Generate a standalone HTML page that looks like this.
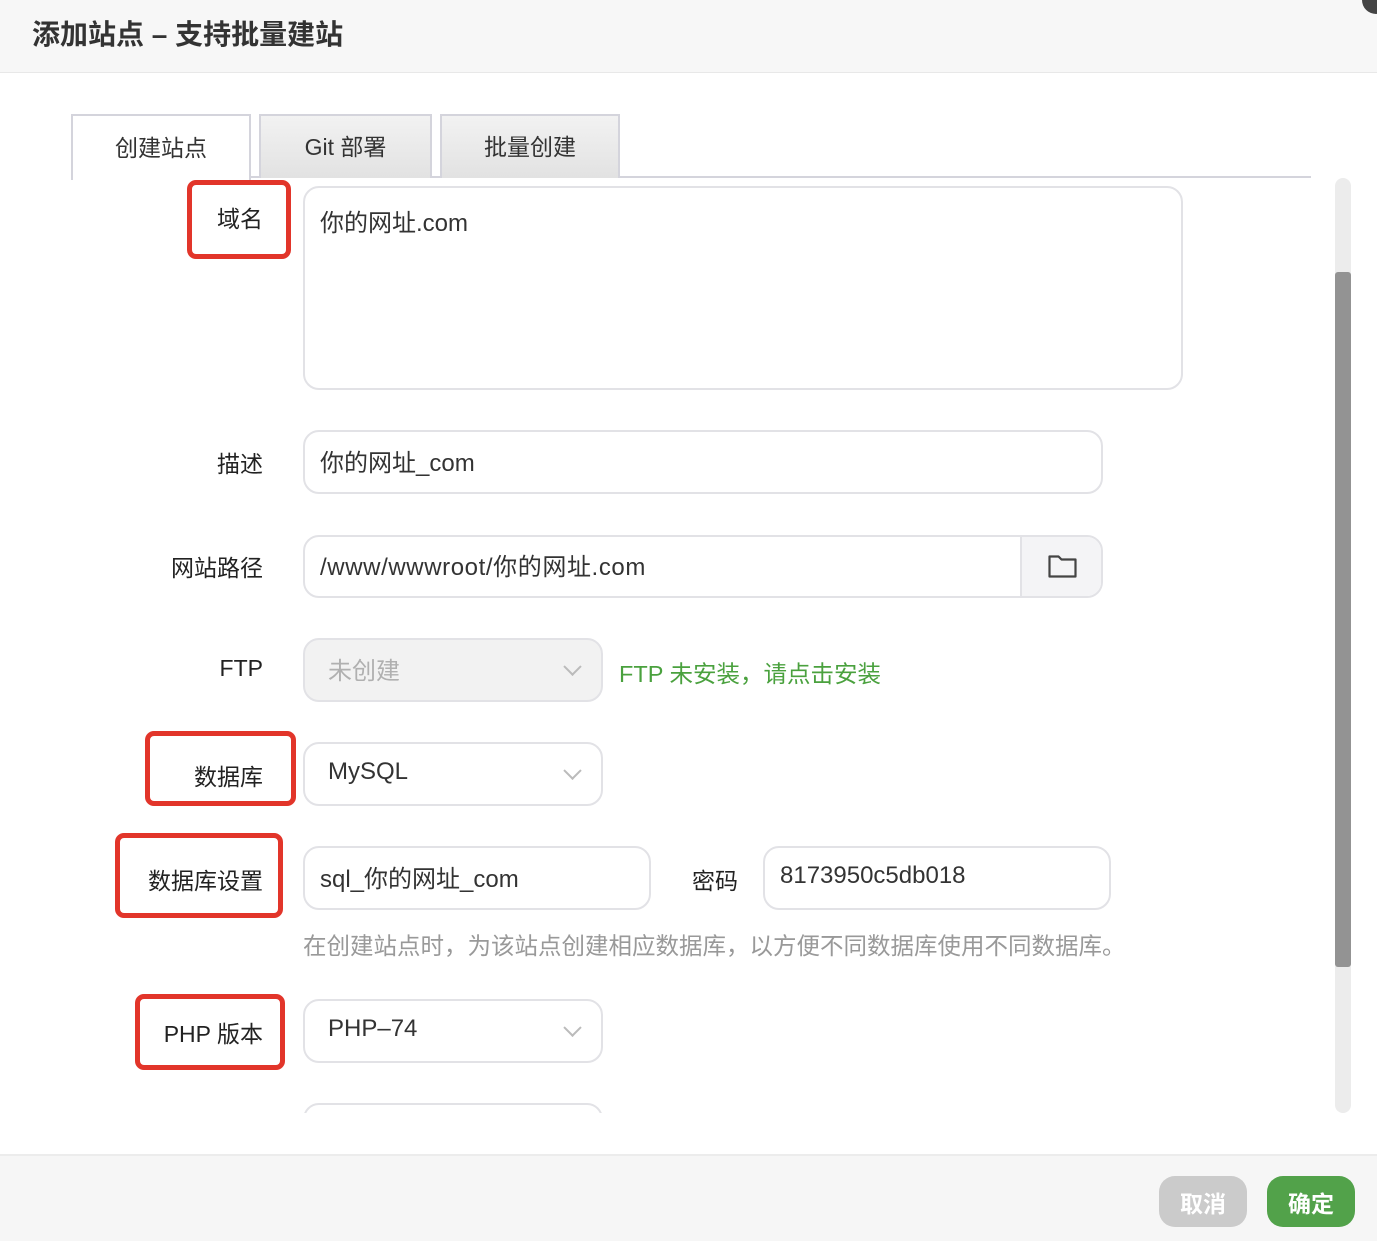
<!DOCTYPE html>
<html><head><meta charset="utf-8"><style>
*{box-sizing:border-box;margin:0;padding:0}
body{width:1377px;height:1241px;position:relative;background:#fff;font-family:"Liberation Sans","Noto Sans CJK SC",sans-serif;overflow:hidden;color:#333}
.a{position:absolute}
.hdr{left:0;top:0;width:1377px;height:73px;background:#f7f7f7;border-bottom:1px solid #e8e8e8}
.title{left:32px;top:13px;font-size:28px;font-weight:bold;color:#333}
.tab{top:114px;height:64px;border:2px solid #d4d4dc;border-bottom:none;font-size:23px;color:#333;display:flex;align-items:center;justify-content:center;padding-bottom:4px;background:linear-gradient(#f2f2f2,#e2e2e2)}
.inp{border:2px solid #e2e2e6;border-radius:16px;background:#fff;font-size:24px;color:#333;padding-left:15px;padding-bottom:4px;display:flex;align-items:center}
.lbl{font-size:23px;color:#222;text-align:right;width:200px}
.red{border:5px solid #e2352a;border-radius:9px}
.chev{position:absolute;right:22px;top:50%;width:13px;height:13px;border-right:2px solid #bbb;border-bottom:2px solid #bbb;transform:translateY(-75%) rotate(45deg)}
</style></head><body>
<div class="a hdr"></div>
<div class="a title">添加站点 – 支持批量建站</div>
<div class="a" style="left:1362px;top:-14px;width:28px;height:28px;border-radius:50%;background:#444"></div>

<div class="a" style="left:71px;top:176px;width:1240px;height:2px;background:#d4d4dc"></div>
<div class="a tab" style="left:71px;width:180px;background:#fff;height:66px">创建站点</div>
<div class="a tab" style="left:259px;width:173px">Git 部署</div>
<div class="a tab" style="left:440px;width:180px">批量创建</div>

<div class="a red" style="left:187px;top:180px;width:104px;height:79px"></div>
<div class="a lbl" style="left:63px;top:200px">域名</div>
<div class="a inp" style="left:303px;top:186px;width:880px;height:204px;align-items:flex-start;padding-top:15px">你的网址.com</div>

<div class="a lbl" style="left:63px;top:445px">描述</div>
<div class="a inp" style="left:303px;top:430px;width:800px;height:64px">你的网址_com</div>

<div class="a lbl" style="left:63px;top:549px">网站路径</div>
<div class="a inp" style="left:303px;top:535px;width:800px;height:63px;overflow:hidden;letter-spacing:0.6px">/www/wwwroot/你的网址.com
<div class="a" style="left:715px;top:0;width:85px;height:63px;background:#f4f4f6;border-left:2px solid #e2e2e6">
<svg class="a" style="left:26px;top:17px" width="30" height="26" viewBox="0 0 30 26"><path d="M1.5 2.5h9l3 3h14v17h-26z" fill="none" stroke="#444" stroke-width="2.2" stroke-linejoin="round"/></svg></div></div>

<div class="a lbl" style="left:63px;top:655px">FTP</div>
<div class="a inp" style="left:303px;top:638px;width:300px;height:64px;background:#f2f2f2;color:#b0b0b0;padding-left:23px">未创建<span class="chev"></span></div>
<div class="a" style="left:619px;top:655px;font-size:23.5px;color:#4aa13e">FTP 未安装，请点击安装</div>

<div class="a red" style="left:145px;top:731px;width:151px;height:75px"></div>
<div class="a lbl" style="left:63px;top:758px">数据库</div>
<div class="a inp" style="left:303px;top:742px;width:300px;height:64px;padding-left:23px">MySQL<span class="chev"></span></div>

<div class="a red" style="left:115px;top:833px;width:168px;height:85px"></div>
<div class="a lbl" style="left:63px;top:862px">数据库设置</div>
<div class="a inp" style="left:303px;top:846px;width:348px;height:64px">sql_你的网址_com</div>
<div class="a" style="left:692px;top:862px;font-size:23px;color:#222">密码</div>
<div class="a inp" style="left:763px;top:846px;width:348px;height:64px">8173950c5db018</div>
<div class="a" style="left:303px;top:927px;font-size:23.5px;color:#999">在创建站点时，为该站点创建相应数据库，以方便不同数据库使用不同数据库。</div>

<div class="a red" style="left:135px;top:994px;width:150px;height:76px"></div>
<div class="a lbl" style="left:63px;top:1015px">PHP 版本</div>
<div class="a inp" style="left:303px;top:999px;width:300px;height:64px;padding-left:23px">PHP–74<span class="chev"></span></div>

<div class="a" style="left:303px;top:1103px;width:300px;height:10px;overflow:hidden"><div style="width:300px;height:64px;border:2px solid #e2e2e6;border-radius:16px"></div></div>

<div class="a" style="left:1335px;top:178px;width:16px;height:935px;background:#ececec;border-radius:8px"></div>
<div class="a" style="left:1335px;top:272px;width:16px;height:695px;background:#939393;border-radius:3px"></div>

<div class="a" style="left:0;top:1154px;width:1377px;height:87px;background:#f6f6f6;border-top:2px solid #ececec"></div>
<div class="a" style="left:1159px;top:1176px;width:88px;height:51px;border-radius:16px;background:#cbcbcb;color:#fff;font-size:23px;font-weight:bold;display:flex;align-items:center;justify-content:center">取消</div>
<div class="a" style="left:1267px;top:1176px;width:88px;height:51px;border-radius:16px;background:#52a24a;color:#fff;font-size:23px;font-weight:bold;display:flex;align-items:center;justify-content:center">确定</div>
</body></html>
